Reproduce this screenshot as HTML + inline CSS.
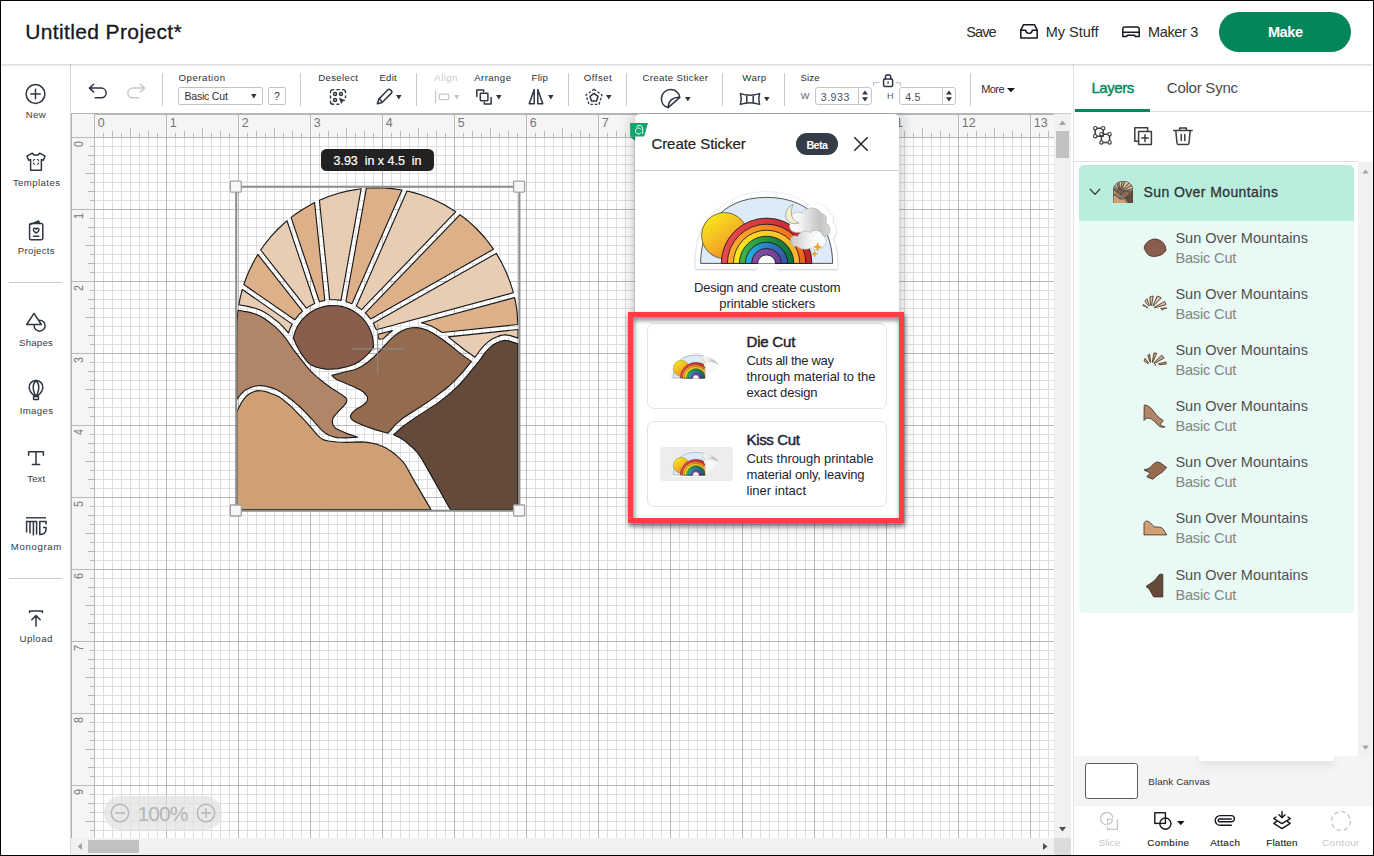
<!DOCTYPE html>
<html lang="en"><head><meta charset="utf-8"><title>Untitled Project - Design Space</title>
<style>
*{box-sizing:border-box;margin:0;padding:0}
html,body{width:1374px;height:856px;overflow:hidden;background:#fff}
body{position:relative;font-family:"Liberation Sans",sans-serif;color:#1e2430}
.a{position:absolute;display:block}
.t{position:absolute;white-space:pre;line-height:1;display:block}
.ic{fill:none;stroke:#2f3542;stroke-width:1.5;stroke-linecap:round;stroke-linejoin:round}
.ic2{stroke:#3d3d3d}
</style></head>
<body>
<div class="a" style="left:71px;top:113px;width:983px;height:725px;background-color:#fff;background-image:linear-gradient(to right,#b9b9b9 1px,transparent 1px),linear-gradient(to bottom,#b9b9b9 1px,transparent 1px),linear-gradient(to right,#dedede 1px,transparent 1px),linear-gradient(to bottom,#dedede 1px,transparent 1px);background-size:72px 72px,72px 72px,9px 9px,9px 9px;background-position:23px 24px,23px 24px,23px 24px,23px 24px;"></div>
<div class="a" style="left:71px;top:113px;width:983px;height:25px;background:#f5f5f5;border-top:2px solid #b6b6b6;border-bottom:1px solid #b9b9b9"></div>
<div class="a" style="left:71px;top:113px;width:24px;height:725px;background:#f5f5f5;border-left:1px solid #b4b4b4;border-right:1px solid #b9b9b9;border-top:1px solid #b4b4b4"></div>
<svg class="a" style="left:0;top:0" width="1374" height="856"><path d="M94.5 114v23M103.5 133v4M112.5 131v6M121.5 133v4M130.5 128v9M139.5 133v4M148.5 131v6M157.5 133v4M166.5 114v23M175.5 133v4M184.5 131v6M193.5 133v4M202.5 128v9M211.5 133v4M220.5 131v6M229.5 133v4M238.5 114v23M247.5 133v4M256.5 131v6M265.5 133v4M274.5 128v9M283.5 133v4M292.5 131v6M301.5 133v4M310.5 114v23M319.5 133v4M328.5 131v6M337.5 133v4M346.5 128v9M355.5 133v4M364.5 131v6M373.5 133v4M382.5 114v23M391.5 133v4M400.5 131v6M409.5 133v4M418.5 128v9M427.5 133v4M436.5 131v6M445.5 133v4M454.5 114v23M463.5 133v4M472.5 131v6M481.5 133v4M490.5 128v9M499.5 133v4M508.5 131v6M517.5 133v4M526.5 114v23M535.5 133v4M544.5 131v6M553.5 133v4M562.5 128v9M571.5 133v4M580.5 131v6M589.5 133v4M598.5 114v23M607.5 133v4M616.5 131v6M625.5 133v4M634.5 128v9M643.5 133v4M652.5 131v6M661.5 133v4M670.5 114v23M679.5 133v4M688.5 131v6M697.5 133v4M706.5 128v9M715.5 133v4M724.5 131v6M733.5 133v4M742.5 114v23M751.5 133v4M760.5 131v6M769.5 133v4M778.5 128v9M787.5 133v4M796.5 131v6M805.5 133v4M814.5 114v23M823.5 133v4M832.5 131v6M841.5 133v4M850.5 128v9M859.5 133v4M868.5 131v6M877.5 133v4M886.5 114v23M895.5 133v4M904.5 131v6M913.5 133v4M922.5 128v9M931.5 133v4M940.5 131v6M949.5 133v4M958.5 114v23M967.5 133v4M976.5 131v6M985.5 133v4M994.5 128v9M1003.5 133v4M1012.5 131v6M1021.5 133v4M1030.5 114v23M1039.5 133v4M1048.5 131v6M72 137.5h22M90 146.5h4M88 155.5h6M90 164.5h4M85 173.5h9M90 182.5h4M88 191.5h6M90 200.5h4M72 209.5h22M90 218.5h4M88 227.5h6M90 236.5h4M85 245.5h9M90 254.5h4M88 263.5h6M90 272.5h4M72 281.5h22M90 290.5h4M88 299.5h6M90 308.5h4M85 317.5h9M90 326.5h4M88 335.5h6M90 344.5h4M72 353.5h22M90 362.5h4M88 371.5h6M90 380.5h4M85 389.5h9M90 398.5h4M88 407.5h6M90 416.5h4M72 425.5h22M90 434.5h4M88 443.5h6M90 452.5h4M85 461.5h9M90 470.5h4M88 479.5h6M90 488.5h4M72 497.5h22M90 506.5h4M88 515.5h6M90 524.5h4M85 533.5h9M90 542.5h4M88 551.5h6M90 560.5h4M72 569.5h22M90 578.5h4M88 587.5h6M90 596.5h4M85 605.5h9M90 614.5h4M88 623.5h6M90 632.5h4M72 641.5h22M90 650.5h4M88 659.5h6M90 668.5h4M85 677.5h9M90 686.5h4M88 695.5h6M90 704.5h4M72 713.5h22M90 722.5h4M88 731.5h6M90 740.5h4M85 749.5h9M90 758.5h4M88 767.5h6M90 776.5h4M72 785.5h22M90 794.5h4M88 803.5h6M90 812.5h4M85 821.5h9M90 830.5h4" stroke="#b9b9b9" stroke-width="1" fill="none" shape-rendering="crispEdges"/></svg>
<span class="t" style="left:97.80px;top:117.22px;font-size:12.5px;color:#767676;">0</span>
<span class="t" style="left:169.80px;top:117.22px;font-size:12.5px;color:#767676;">1</span>
<span class="t" style="left:241.80px;top:117.22px;font-size:12.5px;color:#767676;">2</span>
<span class="t" style="left:313.80px;top:117.22px;font-size:12.5px;color:#767676;">3</span>
<span class="t" style="left:385.80px;top:117.22px;font-size:12.5px;color:#767676;">4</span>
<span class="t" style="left:457.80px;top:117.22px;font-size:12.5px;color:#767676;">5</span>
<span class="t" style="left:529.80px;top:117.22px;font-size:12.5px;color:#767676;">6</span>
<span class="t" style="left:601.80px;top:117.22px;font-size:12.5px;color:#767676;">7</span>
<span class="t" style="left:673.80px;top:117.22px;font-size:12.5px;color:#767676;">8</span>
<span class="t" style="left:745.80px;top:117.22px;font-size:12.5px;color:#767676;">9</span>
<span class="t" style="left:817.80px;top:117.22px;font-size:12.5px;color:#767676;">10</span>
<span class="t" style="left:889.80px;top:117.22px;font-size:12.5px;color:#767676;">11</span>
<span class="t" style="left:961.80px;top:117.22px;font-size:12.5px;color:#767676;">12</span>
<span class="t" style="left:1033.80px;top:117.22px;font-size:12.5px;color:#767676;">13</span>
<span class="t" style="left:72.3px;top:146.7px;font-size:13px;color:#767676;transform-origin:0 0;transform:rotate(-90deg) scaleX(0.82)">0</span>
<span class="t" style="left:72.3px;top:218.7px;font-size:13px;color:#767676;transform-origin:0 0;transform:rotate(-90deg) scaleX(0.82)">1</span>
<span class="t" style="left:72.3px;top:290.7px;font-size:13px;color:#767676;transform-origin:0 0;transform:rotate(-90deg) scaleX(0.82)">2</span>
<span class="t" style="left:72.3px;top:362.7px;font-size:13px;color:#767676;transform-origin:0 0;transform:rotate(-90deg) scaleX(0.82)">3</span>
<span class="t" style="left:72.3px;top:434.7px;font-size:13px;color:#767676;transform-origin:0 0;transform:rotate(-90deg) scaleX(0.82)">4</span>
<span class="t" style="left:72.3px;top:506.7px;font-size:13px;color:#767676;transform-origin:0 0;transform:rotate(-90deg) scaleX(0.82)">5</span>
<span class="t" style="left:72.3px;top:578.7px;font-size:13px;color:#767676;transform-origin:0 0;transform:rotate(-90deg) scaleX(0.82)">6</span>
<span class="t" style="left:72.3px;top:650.7px;font-size:13px;color:#767676;transform-origin:0 0;transform:rotate(-90deg) scaleX(0.82)">7</span>
<span class="t" style="left:72.3px;top:722.7px;font-size:13px;color:#767676;transform-origin:0 0;transform:rotate(-90deg) scaleX(0.82)">8</span>
<span class="t" style="left:72.3px;top:794.7px;font-size:13px;color:#767676;transform-origin:0 0;transform:rotate(-90deg) scaleX(0.82)">9</span>
<svg class="a" style="left:0;top:0" width="1374" height="856" viewBox="0 0 1374 856"><g stroke="#171717" stroke-width="1.12" stroke-linejoin="round"><path d="M242.3 289.5L240.4 296.8L238.8 304.8L248.9 306.6L255.2 308.2L259.5 309.7L264.6 312.3L271.2 316.6L278.3 322.2L283.2 326.9L288.5 333.1L290.2 328.3L292.2 324.1Z" fill="#e8cdb5"/>
<path d="M257.8 254.4L253.3 262.4L250.0 269.0L247.0 275.7L243.8 284.5L294.8 319.8L298.7 314.9L302.5 311.2Z" fill="#dcb18a"/>
<path d="M287.0 220.7L278.0 229.0L271.3 236.2L265.1 243.8L260.7 250.0L306.4 308.1L310.2 305.7L314.7 303.5Z" fill="#e8cdb5"/>
<path d="M314.6 202.6L302.9 209.2L296.8 213.2L291.1 217.4L319.4 301.7L324.8 300.4Z" fill="#dcb18a"/>
<path d="M361.2 188.7L348.2 190.9L338.6 193.2L329.3 196.3L319.4 200.3L329.7 299.8L335.3 299.8L341.0 300.4Z" fill="#e8cdb5"/>
<path d="M402.0 190.0L392.1 188.6L384.8 188.0L374.9 187.8L366.4 188.2L345.9 301.5L351.9 303.7Z" fill="#dcb18a"/>
<path d="M455.8 211.7L443.4 204.3L432.3 199.0L420.8 194.7L413.8 192.6L407.0 191.0L356.4 306.0L361.6 309.6Z" fill="#e8cdb5"/>
<path d="M493.5 249.2L485.1 238.0L476.8 229.0L467.8 220.7L460.0 214.6L365.4 312.9L368.1 315.8L370.6 319.0Z" fill="#dcb18a"/>
<path d="M513.4 292.7L510.3 282.6L505.8 271.2L501.5 262.4L496.3 253.4L373.3 323.3L376.3 329.7Z" fill="#e8cdb5"/>
<path d="M377.8 334.4L378.8 339.2L383.5 338.7L387.7 334.5L392.4 330.5Z" fill="#dcb18a"/>
<path d="M517.9 324.5L517.0 311.3L515.9 304.0L514.6 297.6L421.3 322.7L426.1 324.0L430.7 325.7L435.9 328.5L442.2 332.5Z" fill="#dcb18a"/>
<path d="M448.3 336.9L464.7 350.0L475.0 357.3L480.0 350.2L484.2 345.4L489.6 340.7L492.0 339.1L494.3 338.0L498.0 336.4L500.9 335.4L503.2 335.0L505.8 334.9L510.4 335.6L518.0 338.1L518.0 329.5Z" fill="#e8cdb5"/>
<path d="M236.8 336.5L236.8 399.4L241.1 394.0L244.6 390.6L247.5 388.9L252.1 387.0L257.0 385.8L260.7 385.6L265.9 386.2L271.1 387.6L275.8 389.3L279.8 391.4L288.3 397.3L294.1 401.8L300.0 407.0L305.9 412.8L310.8 418.0L321.4 429.8L324.2 432.4L326.3 433.8L329.1 435.3L331.8 436.3L334.7 437.1L337.6 437.6L345.8 437.9L357.6 437.3L345.8 433.1L337.9 429.6L335.9 428.4L334.5 427.2L333.5 425.9L332.8 424.1L332.4 422.2L332.4 420.4L332.9 418.4L333.7 416.9L335.5 414.7L344.0 405.7L346.0 402.9L346.6 401.6L346.7 400.4L346.6 399.3L345.7 397.8L342.5 395.1L331.6 388.2L324.7 383.3L316.6 376.6L310.7 371.1L306.5 366.3L293.4 349.6L286.4 339.2L280.3 331.9L274.7 326.4L269.4 322.2L265.0 319.0L260.4 316.2L257.2 314.7L253.7 313.5L249.9 312.4L238.0 310.2L237.0 321.0Z" fill="#b08568"/>
<path d="M236.8 411.6L236.8 509.6L431.0 509.6L415.2 482.6L405.4 465.0L403.0 461.9L399.6 458.4L395.6 454.7L392.5 452.2L387.0 448.6L382.3 446.3L377.5 444.4L372.6 443.2L367.6 442.4L360.9 441.9L346.3 442.4L337.0 442.0L328.4 441.0L324.6 440.1L322.7 439.4L320.4 437.9L317.6 435.4L310.7 427.2L303.0 418.7L290.3 405.7L282.6 399.4L278.9 396.8L275.8 395.2L268.4 392.4L264.3 391.3L260.6 390.7L258.4 390.6L255.5 391.1L251.3 392.8L248.3 394.6L246.3 396.2L244.1 398.8L241.5 402.5Z" fill="#cf9f75"/>
<path d="M332.0 375.4L334.2 377.8L336.6 379.5L354.9 387.3L360.7 390.2L363.0 391.7L364.8 393.5L366.3 395.3L367.3 397.1L367.7 398.7L367.4 400.2L366.7 401.6L365.6 403.0L363.4 405.0L355.9 409.4L353.1 411.9L351.5 413.9L350.7 415.3L350.5 416.5L350.7 417.7L351.7 419.3L353.5 420.8L355.5 422.0L364.1 425.7L375.1 429.6L387.9 433.3L394.9 425.1L401.4 419.3L405.7 416.2L422.5 405.5L431.2 399.6L442.9 391.0L448.8 386.3L454.7 380.7L460.5 374.7L464.2 370.4L471.4 361.4L461.4 354.4L450.8 345.8L441.9 339.0L432.2 332.7L427.4 330.3L421.5 328.4L416.7 327.6L411.8 327.8L406.9 328.8L403.0 330.3L399.1 332.5L395.3 335.2L389.5 340.4L380.8 350.0L373.0 357.8L368.1 362.0L362.3 366.0L358.4 368.1L354.6 369.7L343.7 372.3Z" fill="#956b50"/>
<path d="M393.7 434.7L400.3 438.0L404.9 441.1L413.1 448.0L416.0 451.0L418.0 453.4L422.1 459.5L431.2 475.4L450.3 509.6L518.0 509.6L518.0 343.9L508.9 340.9L506.8 340.5L504.9 340.4L502.4 340.8L500.0 341.5L495.9 343.3L493.3 344.8L489.6 347.9L485.7 351.9L479.1 361.0L464.4 379.1L459.5 384.5L453.7 390.1L444.9 397.6L437.0 403.6L415.7 417.4L403.9 425.6L400.3 428.6Z" fill="#644a3b"/>
<path d="M293.3 338.1L296.6 345.4L300.7 352.8L306.2 360.3L308.7 363.1L311.1 365.0L315.6 366.9L319.7 368.0L325.6 369.1L331.2 369.3L338.3 368.6L347.0 366.8L353.9 364.5L359.0 361.7L363.6 358.1L368.8 353.2L373.5 347.4L373.2 341.4L372.6 337.4L371.5 333.5L370.1 329.8L368.3 326.2L366.2 322.8L363.7 319.6L360.9 316.7L357.9 314.1L352.9 310.7L349.3 308.9L345.5 307.5L341.6 306.4L337.7 305.8L331.7 305.5L327.6 305.9L323.7 306.6L319.8 307.7L316.1 309.2L312.5 311.1L309.2 313.3L306.0 315.8L303.2 318.6L300.6 321.7L298.3 325.0L296.4 328.6L294.9 332.3Z" fill="#8a5e4c"/></g></svg>
<svg class="a" style="left:0;top:0" width="1374" height="856" viewBox="0 0 1374 856"><rect x="236.2" y="186.75" width="283.2" height="323.95" fill="none" stroke="#8e8e8e" stroke-width="2.1"/><rect x="230.3" y="181.1" width="11" height="11" rx="0.8" fill="#f7f7f7" stroke="#a2a2a2" stroke-width="1.3"/><rect x="513.6" y="181.1" width="11" height="11" rx="0.8" fill="#f7f7f7" stroke="#a2a2a2" stroke-width="1.3"/><rect x="230.3" y="505" width="11" height="11" rx="0.8" fill="#f7f7f7" stroke="#a2a2a2" stroke-width="1.3"/><rect x="513.6" y="505" width="11" height="11" rx="0.8" fill="#f7f7f7" stroke="#a2a2a2" stroke-width="1.3"/><path d="M352 348.9H403M377.6 324V374" stroke="#8c8c8c" stroke-opacity="0.85" stroke-width="1.2" fill="none"/></svg>
<div class="a" style="left:321px;top:149px;width:113px;height:21.6px;background:#222;border-radius:5.5px"></div>
<span class="t" style="left:333.50px;top:154.62px;font-size:12.5px;color:#fff;letter-spacing:-0.015px;-webkit-text-stroke:0.2px #fff;">3.93  in x 4.5  in</span>
<div class="a" style="left:104px;top:796px;width:118px;height:34px;background:rgba(225,225,225,.75);border-radius:17px"></div>
<svg class="a" style="left:110px;top:803px;" width="20" height="20" viewBox="0 0 20 20"><circle cx="10" cy="10" r="8.7" fill="none" stroke="#b5b5b5" stroke-width="1.4"/><path d="M5 10h10" stroke="#b5b5b5" stroke-width="1.4"/></svg>
<svg class="a" style="left:196px;top:803px;" width="20" height="20" viewBox="0 0 20 20"><circle cx="10" cy="10" r="8.7" fill="none" stroke="#b5b5b5" stroke-width="1.4"/><path d="M5 10h10M10 5v10" stroke="#b5b5b5" stroke-width="1.4"/></svg>
<span class="t" style="left:137.50px;top:802.72px;font-size:21px;color:#b5b5b5;letter-spacing:-0.904px;">100%</span>
<div class="a" style="left:1054px;top:113px;width:17px;height:725px;background:#f1f1f1;border-top:1px solid #c9c9c9"></div>
<div class="a" style="left:71px;top:838px;width:983px;height:17px;background:#f1f1f1"></div>
<div class="a" style="left:1054px;top:838px;width:17px;height:17px;background:#dcdcdc"></div>
<div class="a" style="left:1056px;top:131px;width:13px;height:27px;background:#c1c1c1"></div>
<div class="a" style="left:88px;top:840px;width:51px;height:13px;background:#c1c1c1"></div>
<svg class="a" style="left:1054px;top:113px;" width="17" height="17" viewBox="0 0 17 17"><path d="M5 12l3.5-4.5 3.5 4.5z" fill="#a3a3a3"/></svg>
<svg class="a" style="left:1054px;top:821px;" width="17" height="17" viewBox="0 0 17 17"><path d="M5 6l3.5 4.5 3.5-4.5z" fill="#505050"/></svg>
<svg class="a" style="left:71px;top:838px;" width="17" height="17" viewBox="0 0 17 17"><path d="M11 5l-4.5 3.5 4.5 3.5z" fill="#a3a3a3"/></svg>
<svg class="a" style="left:1037px;top:838px;" width="17" height="17" viewBox="0 0 17 17"><path d="M6 5l4.5 3.5-4.5 3.5z" fill="#505050"/></svg>
<div class="a" style="left:635px;top:114px;width:264px;height:407px;background:#fff;border-radius:5px 5px 0 0;box-shadow:0 1px 16px rgba(0,0,0,.3)"></div>
<div class="a" style="left:635px;top:170px;width:264px;height:1px;background:#cfcfcf"></div>
<svg class="a" style="left:628px;top:120px;" width="22" height="24" viewBox="0 0 22 24"><path d="M2.1 2.9H20L16.2 16.5H2.1Z" fill="#12a66f"/><path d="M2.1 16.5H7.1V21Z" fill="#0c8a5c"/><path d="M13.2 9.3A3.1 3.1 0 1 0 13.2 12.7M14.7 13.7V8.6A3.4 3.4 0 0 0 8.4 6.9" fill="none" stroke="#fff" stroke-width="0.95" stroke-linecap="round"/></svg>
<span class="t" style="left:651.40px;top:135.70px;font-size:15px;color:#222;letter-spacing:-0.049px;-webkit-text-stroke:0.2px #222;">Create Sticker</span>
<div class="a" style="left:796px;top:133.3px;width:42px;height:21.4px;background:#353b48;border-radius:11px"></div>
<span class="t" style="left:806.45px;top:139.56px;font-size:10.8px;color:#fff;font-weight:700;letter-spacing:-0.637px;">Beta</span>
<svg class="a" style="left:852px;top:135px;" width="18" height="18" viewBox="0 0 18 18"><path d="M2.3 2.3L15.7 15.7M15.7 2.3L2.3 15.7" stroke="#20242c" stroke-width="1.5" fill="none"/></svg>
<svg class="a" style="left:686px;top:184px;" width="160" height="100" viewBox="0 0 160 100"><defs><linearGradient id="r0sun" x1="0.15" y1="0.1" x2="0.8" y2="0.95"><stop offset="0" stop-color="#f8e71c"/><stop offset="1" stop-color="#f0852d"/></linearGradient><linearGradient id="r0cl" x1="0" y1="0" x2="1" y2="0"><stop offset="0" stop-color="#fff"/><stop offset="0.25" stop-color="#f4f4f4"/><stop offset="0.75" stop-color="#c4c4c4"/><stop offset="1" stop-color="#d8d8d8"/></linearGradient><linearGradient id="r0cl2" x1="0" y1="0" x2="1" y2="0"><stop offset="0" stop-color="#c9c9c9"/><stop offset="0.6" stop-color="#f6f6f6"/><stop offset="1" stop-color="#fff"/></linearGradient><linearGradient id="r0b0" x1="0" y1="0" x2="1" y2="0"><stop offset="0" stop-color="#ea4a50"/><stop offset="1" stop-color="#c0242b"/></linearGradient><linearGradient id="r0b1" x1="0" y1="0" x2="1" y2="0"><stop offset="0" stop-color="#fcae2c"/><stop offset="1" stop-color="#f2611f"/></linearGradient><linearGradient id="r0b2" x1="0" y1="0" x2="1" y2="0"><stop offset="0" stop-color="#f9e81f"/><stop offset="1" stop-color="#fbb034"/></linearGradient><linearGradient id="r0b3" x1="0" y1="0" x2="1" y2="0"><stop offset="0" stop-color="#3fb54a"/><stop offset="1" stop-color="#0a7138"/></linearGradient><linearGradient id="r0b4" x1="0" y1="0" x2="1" y2="0"><stop offset="0" stop-color="#1fb4e4"/><stop offset="1" stop-color="#3a53a4"/></linearGradient><linearGradient id="r0b5" x1="0" y1="0" x2="1" y2="0"><stop offset="0" stop-color="#8a4fa6"/><stop offset="1" stop-color="#6c3f98"/></linearGradient><filter id="r0sh" x="-10%" y="-10%" width="120%" height="130%"><feGaussianBlur stdDeviation="1.3"/></filter></defs><g transform="translate(80.6,79.4)"><path d="M-71 5.5L-71 -4C-70 -30 -60 -47 -47 -55C-33 -68 -14 -71.5 0 -71.5C17 -71.5 32 -66 42 -58C49 -61 58 -59 61.5 -52C66 -49 67.5 -44 66 -41C71 -36 70.5 -29 66.5 -25.5C69 -18 71 -10 71 -3L71 5.5L10 5.5L9.5 0C9 -6 4 -9 0 -9C-4 -9 -9 -6 -9.5 0L-10 5.5Z" fill="#000" opacity="0.3" filter="url(#r0sh)" transform="translate(0,0.6)"/><path d="M-71 5.5L-71 -4C-70 -30 -60 -47 -47 -55C-33 -68 -14 -71.5 0 -71.5C17 -71.5 32 -66 42 -58C49 -61 58 -59 61.5 -52C66 -49 67.5 -44 66 -41C71 -36 70.5 -29 66.5 -25.5C69 -18 71 -10 71 -3L71 5.5L10 5.5L9.5 0C9 -6 4 -9 0 -9C-4 -9 -9 -6 -9.5 0L-10 5.5Z" fill="#fff"/><path d="M-66 0C-66 -30 -50 -66 0 -66C50 -66 66 -30 66 0Z" fill="#ddebf8" stroke="#111" stroke-width="0.7"/><circle cx="-42" cy="-27.8" r="23" fill="url(#r0sun)" stroke="#222" stroke-width="0.63"/><path d="M-45.3 0A45.3 45.3 0 0 1 45.3 0Z" fill="url(#r0b0)" stroke="#111" stroke-width="0.805"/><path d="M-39.2 0A39.2 39.2 0 0 1 39.2 0Z" fill="url(#r0b1)" stroke="#111" stroke-width="0.805"/><path d="M-33.2 0A33.2 33.2 0 0 1 33.2 0Z" fill="url(#r0b2)" stroke="#111" stroke-width="0.805"/><path d="M-27.2 0A27.2 27.2 0 0 1 27.2 0Z" fill="url(#r0b3)" stroke="#111" stroke-width="0.805"/><path d="M-21.1 0A21.1 21.1 0 0 1 21.1 0Z" fill="url(#r0b4)" stroke="#111" stroke-width="0.805"/><path d="M-15 0A15 15 0 0 1 15 0Z" fill="url(#r0b5)" stroke="#111" stroke-width="0.805"/><path d="M-9 0.5A9 9 0 0 1 9 0.5Z" fill="#fff" stroke="#111" stroke-width="0.805"/><path d="M-10 0.6h20v3h-20z" fill="#fff"/><path d="M23.5 -40C21 -47 27 -53.5 35.5 -50.5C38.5 -56.5 50 -58 55 -50C60 -49 61 -43 59 -40.5C65 -38 65.5 -29 58 -26.5C55 -25.5 51 -27 49.5 -29.5L30 -31C24 -31.5 21.5 -36 23.5 -40Z" fill="url(#r0cl)" stroke="#9a9a9a" stroke-width="0.42"/><path d="M26.5 -59C19.5 -56 17.5 -48.5 20.5 -43.5C23 -39.5 28.5 -39 32.5 -40.5C26.5 -42 22 -49 26.5 -59Z" fill="#f6f1c9" stroke="#666" stroke-width="0.49"/><path d="M24 -22.5C23 -26.5 27 -29 31 -27C33 -32 40 -34 44 -30.5C47 -35 55 -33 56 -28C60 -26 60.5 -20 57 -17.5C55 -13.5 47 -12.5 44 -15.5C40 -13 33 -14 31 -17C27.5 -16 24 -18.5 24 -22.5Z" fill="url(#r0cl2)" stroke="#9a9a9a" stroke-width="0.42"/><path d="M51 -20.7L52.05 -17.55L55.2 -16.5L52.05 -15.45L51 -12.3L49.95 -15.45L46.8 -16.5L49.95 -17.55ZM48 -12.7L48.8 -10.3L51.2 -9.5L48.8 -8.7L48 -6.3L47.2 -8.7L44.8 -9.5L47.2 -10.3Z" fill="#f5a623" stroke="#c97a10" stroke-width="0.3"/></g></svg>
<span class="t" style="left:694.05px;top:281.20px;font-size:13px;color:#1e2430;letter-spacing:-0.197px;">Design and create custom</span>
<span class="t" style="left:719.30px;top:297.00px;font-size:13px;color:#1e2430;letter-spacing:-0.091px;">printable stickers</span>
<div class="a" style="left:633px;top:317px;width:266px;height:201px;background:#fff"></div>
<div class="a" style="left:647px;top:323px;width:239.5px;height:85.8px;border:1px solid #e4e4e4;border-radius:7px;background:#fff"></div>
<div class="a" style="left:647px;top:421px;width:239.5px;height:85.8px;border:1px solid #e4e4e4;border-radius:7px;background:#fff"></div>
<span class="t" style="left:746.50px;top:334.10px;font-size:15px;color:#1e2430;letter-spacing:-0.203px;-webkit-text-stroke:0.45px #1e2430;">Die Cut</span>
<span class="t" style="left:746.50px;top:353.90px;font-size:13px;color:#1e2430;letter-spacing:-0.284px;">Cuts all the way</span>
<span class="t" style="left:746.50px;top:369.90px;font-size:13px;color:#1e2430;letter-spacing:-0.049px;">through material to the</span>
<span class="t" style="left:746.50px;top:385.90px;font-size:13px;color:#1e2430;letter-spacing:-0.181px;">exact design</span>
<span class="t" style="left:746.50px;top:432.00px;font-size:15px;color:#1e2430;letter-spacing:-0.335px;-webkit-text-stroke:0.45px #1e2430;">Kiss Cut</span>
<span class="t" style="left:746.50px;top:451.80px;font-size:13px;color:#1e2430;letter-spacing:-0.044px;">Cuts through printable</span>
<span class="t" style="left:746.50px;top:467.80px;font-size:13px;color:#1e2430;letter-spacing:-0.150px;">material only, leaving</span>
<span class="t" style="left:746.50px;top:483.80px;font-size:13px;color:#1e2430;letter-spacing:0.023px;">liner intact</span>
<div class="a" style="left:659.5px;top:447px;width:73.5px;height:33.5px;background:#eceeed;border-radius:3px"></div>
<svg class="a" style="left:669px;top:351px;" width="56" height="32" viewBox="0 0 56 32"><defs><linearGradient id="r1sun" x1="0.15" y1="0.1" x2="0.8" y2="0.95"><stop offset="0" stop-color="#f8e71c"/><stop offset="1" stop-color="#f0852d"/></linearGradient><linearGradient id="r1cl" x1="0" y1="0" x2="1" y2="0"><stop offset="0" stop-color="#fff"/><stop offset="0.25" stop-color="#f4f4f4"/><stop offset="0.75" stop-color="#c4c4c4"/><stop offset="1" stop-color="#d8d8d8"/></linearGradient><linearGradient id="r1cl2" x1="0" y1="0" x2="1" y2="0"><stop offset="0" stop-color="#c9c9c9"/><stop offset="0.6" stop-color="#f6f6f6"/><stop offset="1" stop-color="#fff"/></linearGradient><linearGradient id="r1b0" x1="0" y1="0" x2="1" y2="0"><stop offset="0" stop-color="#ea4a50"/><stop offset="1" stop-color="#c0242b"/></linearGradient><linearGradient id="r1b1" x1="0" y1="0" x2="1" y2="0"><stop offset="0" stop-color="#fcae2c"/><stop offset="1" stop-color="#f2611f"/></linearGradient><linearGradient id="r1b2" x1="0" y1="0" x2="1" y2="0"><stop offset="0" stop-color="#f9e81f"/><stop offset="1" stop-color="#fbb034"/></linearGradient><linearGradient id="r1b3" x1="0" y1="0" x2="1" y2="0"><stop offset="0" stop-color="#3fb54a"/><stop offset="1" stop-color="#0a7138"/></linearGradient><linearGradient id="r1b4" x1="0" y1="0" x2="1" y2="0"><stop offset="0" stop-color="#1fb4e4"/><stop offset="1" stop-color="#3a53a4"/></linearGradient><linearGradient id="r1b5" x1="0" y1="0" x2="1" y2="0"><stop offset="0" stop-color="#8a4fa6"/><stop offset="1" stop-color="#6c3f98"/></linearGradient><filter id="r1sh" x="-10%" y="-10%" width="120%" height="130%"><feGaussianBlur stdDeviation="1.3"/></filter></defs><linearGradient id="r1pl" x1="0" y1="0" x2="1" y2="0.3"><stop offset="0" stop-color="#fff"/><stop offset="0.45" stop-color="#eaeaea"/><stop offset="1" stop-color="#adadad"/></linearGradient><clipPath id="r1cp"><path d="M0 0H33.6L36.1 12.5V32H0Z"/></clipPath><path d="M36 11.6L49.9 14.2L36 27.2Z" fill="#f8f8f8"/><g clip-path="url(#r1cp)"><g transform="translate(26.9,27) scale(0.347)"><path d="M-71 5.5L-71 -4C-70 -30 -60 -47 -47 -55C-33 -68 -14 -71.5 0 -71.5C17 -71.5 32 -66 42 -58C49 -61 58 -59 61.5 -52C66 -49 67.5 -44 66 -41C71 -36 70.5 -29 66.5 -25.5C69 -18 71 -10 71 -3L71 5.5L10 5.5L9.5 0C9 -6 4 -9 0 -9C-4 -9 -9 -6 -9.5 0L-10 5.5Z" fill="#000" opacity="0.2" filter="url(#r1sh)"/><path d="M-71 5.5L-71 -4C-70 -30 -60 -47 -47 -55C-33 -68 -14 -71.5 0 -71.5C17 -71.5 32 -66 42 -58C49 -61 58 -59 61.5 -52C66 -49 67.5 -44 66 -41C71 -36 70.5 -29 66.5 -25.5C69 -18 71 -10 71 -3L71 5.5L10 5.5L9.5 0C9 -6 4 -9 0 -9C-4 -9 -9 -6 -9.5 0L-10 5.5Z" fill="#fff"/><path d="M-66 0C-66 -30 -50 -66 0 -66C50 -66 66 -30 66 0Z" fill="#ddebf8" stroke="#111" stroke-width="0.75"/><circle cx="-42" cy="-27.8" r="23" fill="url(#r1sun)" stroke="#222" stroke-width="0.675"/><path d="M-45.3 0A45.3 45.3 0 0 1 45.3 0Z" fill="url(#r1b0)" stroke="#111" stroke-width="0.8625"/><path d="M-39.2 0A39.2 39.2 0 0 1 39.2 0Z" fill="url(#r1b1)" stroke="#111" stroke-width="0.8625"/><path d="M-33.2 0A33.2 33.2 0 0 1 33.2 0Z" fill="url(#r1b2)" stroke="#111" stroke-width="0.8625"/><path d="M-27.2 0A27.2 27.2 0 0 1 27.2 0Z" fill="url(#r1b3)" stroke="#111" stroke-width="0.8625"/><path d="M-21.1 0A21.1 21.1 0 0 1 21.1 0Z" fill="url(#r1b4)" stroke="#111" stroke-width="0.8625"/><path d="M-15 0A15 15 0 0 1 15 0Z" fill="url(#r1b5)" stroke="#111" stroke-width="0.8625"/><path d="M-9 0.5A9 9 0 0 1 9 0.5Z" fill="#fff" stroke="#111" stroke-width="0.8625"/><path d="M-10 0.6h20v3h-20z" fill="#fff"/><path d="M23.5 -40C21 -47 27 -53.5 35.5 -50.5C38.5 -56.5 50 -58 55 -50C60 -49 61 -43 59 -40.5C65 -38 65.5 -29 58 -26.5C55 -25.5 51 -27 49.5 -29.5L30 -31C24 -31.5 21.5 -36 23.5 -40Z" fill="url(#r1cl)" stroke="#9a9a9a" stroke-width="0.45"/><path d="M26.5 -59C19.5 -56 17.5 -48.5 20.5 -43.5C23 -39.5 28.5 -39 32.5 -40.5C26.5 -42 22 -49 26.5 -59Z" fill="#f6f1c9" stroke="#666" stroke-width="0.525"/><path d="M24 -22.5C23 -26.5 27 -29 31 -27C33 -32 40 -34 44 -30.5C47 -35 55 -33 56 -28C60 -26 60.5 -20 57 -17.5C55 -13.5 47 -12.5 44 -15.5C40 -13 33 -14 31 -17C27.5 -16 24 -18.5 24 -22.5Z" fill="url(#r1cl2)" stroke="#9a9a9a" stroke-width="0.45"/></g></g><path d="M33.6 5.6C38 5.2 45.5 7.4 49.3 13.8C45 10.6 40 10.4 35.9 11.4Z" fill="url(#r1pl)" stroke="#cfcfcf" stroke-width="0.4"/></svg>
<svg class="a" style="left:669px;top:447.8px;" width="56" height="32" viewBox="0 0 56 32"><defs><linearGradient id="r2sun" x1="0.15" y1="0.1" x2="0.8" y2="0.95"><stop offset="0" stop-color="#f8e71c"/><stop offset="1" stop-color="#f0852d"/></linearGradient><linearGradient id="r2cl" x1="0" y1="0" x2="1" y2="0"><stop offset="0" stop-color="#fff"/><stop offset="0.25" stop-color="#f4f4f4"/><stop offset="0.75" stop-color="#c4c4c4"/><stop offset="1" stop-color="#d8d8d8"/></linearGradient><linearGradient id="r2cl2" x1="0" y1="0" x2="1" y2="0"><stop offset="0" stop-color="#c9c9c9"/><stop offset="0.6" stop-color="#f6f6f6"/><stop offset="1" stop-color="#fff"/></linearGradient><linearGradient id="r2b0" x1="0" y1="0" x2="1" y2="0"><stop offset="0" stop-color="#ea4a50"/><stop offset="1" stop-color="#c0242b"/></linearGradient><linearGradient id="r2b1" x1="0" y1="0" x2="1" y2="0"><stop offset="0" stop-color="#fcae2c"/><stop offset="1" stop-color="#f2611f"/></linearGradient><linearGradient id="r2b2" x1="0" y1="0" x2="1" y2="0"><stop offset="0" stop-color="#f9e81f"/><stop offset="1" stop-color="#fbb034"/></linearGradient><linearGradient id="r2b3" x1="0" y1="0" x2="1" y2="0"><stop offset="0" stop-color="#3fb54a"/><stop offset="1" stop-color="#0a7138"/></linearGradient><linearGradient id="r2b4" x1="0" y1="0" x2="1" y2="0"><stop offset="0" stop-color="#1fb4e4"/><stop offset="1" stop-color="#3a53a4"/></linearGradient><linearGradient id="r2b5" x1="0" y1="0" x2="1" y2="0"><stop offset="0" stop-color="#8a4fa6"/><stop offset="1" stop-color="#6c3f98"/></linearGradient><filter id="r2sh" x="-10%" y="-10%" width="120%" height="130%"><feGaussianBlur stdDeviation="1.3"/></filter></defs><linearGradient id="r2pl" x1="0" y1="0" x2="1" y2="0.3"><stop offset="0" stop-color="#fff"/><stop offset="0.45" stop-color="#eaeaea"/><stop offset="1" stop-color="#adadad"/></linearGradient><clipPath id="r2cp"><path d="M0 0H33.6L36.1 12.5V32H0Z"/></clipPath><path d="M36 11.6L49.9 14.2L36 27.2Z" fill="#f8f8f8"/><g clip-path="url(#r2cp)"><g transform="translate(26.9,27) scale(0.347)"><path d="M-71 5.5L-71 -4C-70 -30 -60 -47 -47 -55C-33 -68 -14 -71.5 0 -71.5C17 -71.5 32 -66 42 -58C49 -61 58 -59 61.5 -52C66 -49 67.5 -44 66 -41C71 -36 70.5 -29 66.5 -25.5C69 -18 71 -10 71 -3L71 5.5L10 5.5L9.5 0C9 -6 4 -9 0 -9C-4 -9 -9 -6 -9.5 0L-10 5.5Z" fill="#000" opacity="0.2" filter="url(#r2sh)"/><path d="M-71 5.5L-71 -4C-70 -30 -60 -47 -47 -55C-33 -68 -14 -71.5 0 -71.5C17 -71.5 32 -66 42 -58C49 -61 58 -59 61.5 -52C66 -49 67.5 -44 66 -41C71 -36 70.5 -29 66.5 -25.5C69 -18 71 -10 71 -3L71 5.5L10 5.5L9.5 0C9 -6 4 -9 0 -9C-4 -9 -9 -6 -9.5 0L-10 5.5Z" fill="#fff"/><path d="M-66 0C-66 -30 -50 -66 0 -66C50 -66 66 -30 66 0Z" fill="#ddebf8" stroke="#111" stroke-width="0.75"/><circle cx="-42" cy="-27.8" r="23" fill="url(#r2sun)" stroke="#222" stroke-width="0.675"/><path d="M-45.3 0A45.3 45.3 0 0 1 45.3 0Z" fill="url(#r2b0)" stroke="#111" stroke-width="0.8625"/><path d="M-39.2 0A39.2 39.2 0 0 1 39.2 0Z" fill="url(#r2b1)" stroke="#111" stroke-width="0.8625"/><path d="M-33.2 0A33.2 33.2 0 0 1 33.2 0Z" fill="url(#r2b2)" stroke="#111" stroke-width="0.8625"/><path d="M-27.2 0A27.2 27.2 0 0 1 27.2 0Z" fill="url(#r2b3)" stroke="#111" stroke-width="0.8625"/><path d="M-21.1 0A21.1 21.1 0 0 1 21.1 0Z" fill="url(#r2b4)" stroke="#111" stroke-width="0.8625"/><path d="M-15 0A15 15 0 0 1 15 0Z" fill="url(#r2b5)" stroke="#111" stroke-width="0.8625"/><path d="M-9 0.5A9 9 0 0 1 9 0.5Z" fill="#fff" stroke="#111" stroke-width="0.8625"/><path d="M-10 0.6h20v3h-20z" fill="#fff"/><path d="M23.5 -40C21 -47 27 -53.5 35.5 -50.5C38.5 -56.5 50 -58 55 -50C60 -49 61 -43 59 -40.5C65 -38 65.5 -29 58 -26.5C55 -25.5 51 -27 49.5 -29.5L30 -31C24 -31.5 21.5 -36 23.5 -40Z" fill="url(#r2cl)" stroke="#9a9a9a" stroke-width="0.45"/><path d="M26.5 -59C19.5 -56 17.5 -48.5 20.5 -43.5C23 -39.5 28.5 -39 32.5 -40.5C26.5 -42 22 -49 26.5 -59Z" fill="#f6f1c9" stroke="#666" stroke-width="0.525"/><path d="M24 -22.5C23 -26.5 27 -29 31 -27C33 -32 40 -34 44 -30.5C47 -35 55 -33 56 -28C60 -26 60.5 -20 57 -17.5C55 -13.5 47 -12.5 44 -15.5C40 -13 33 -14 31 -17C27.5 -16 24 -18.5 24 -22.5Z" fill="url(#r2cl2)" stroke="#9a9a9a" stroke-width="0.45"/></g></g><path d="M33.6 5.6C38 5.2 45.5 7.4 49.3 13.8C45 10.6 40 10.4 35.9 11.4Z" fill="url(#r2pl)" stroke="#cfcfcf" stroke-width="0.4"/></svg>
<div class="a" style="left:628px;top:312px;width:276px;height:211px;border:5px solid #fd4043;filter:drop-shadow(1px 3.5px 2.5px rgba(0,0,0,.55))"></div>
<div class="a" style="left:71px;top:66px;width:1002.5px;height:47px;background:#fff"></div>
<div class="a" style="left:162px;top:72.5px;width:1px;height:33px;background:#c9c9c9"></div>
<div class="a" style="left:300px;top:72.5px;width:1px;height:33px;background:#c9c9c9"></div>
<div class="a" style="left:416px;top:72.5px;width:1px;height:33px;background:#c9c9c9"></div>
<div class="a" style="left:568px;top:72.5px;width:1px;height:33px;background:#c9c9c9"></div>
<div class="a" style="left:626px;top:72.5px;width:1px;height:33px;background:#c9c9c9"></div>
<div class="a" style="left:722px;top:72.5px;width:1px;height:33px;background:#c9c9c9"></div>
<div class="a" style="left:784px;top:72.5px;width:1px;height:33px;background:#c9c9c9"></div>
<div class="a" style="left:970px;top:72.5px;width:1px;height:33px;background:#c9c9c9"></div>
<svg class="a" style="left:86px;top:81px;" width="24" height="20" viewBox="0 0 24 20"><path class="ic" d="M7.6 3.3L3.4 7.1L7.6 10.9M3.8 7.1H15.3A4.85 4.85 0 0 1 15.3 16.8H9.3" stroke-width="1.5"/></svg>
<svg class="a" style="left:124px;top:81px;" width="24" height="20" viewBox="0 0 24 20"><path class="ic" d="M16.4 3.3L20.6 7.1L16.4 10.9M20.2 7.1H8.7A4.85 4.85 0 0 0 8.7 16.8H14.7" stroke-width="1.5" style="stroke:#c6c9ce"/></svg>
<span class="t" style="left:178.60px;top:73.07px;font-size:9.6px;color:#2a303c;letter-spacing:0.530px;">Operation</span>
<div class="a" style="left:178px;top:87px;width:84.5px;height:18px;border:1px solid #c2c2c2;border-radius:2px;background:#fff"></div>
<span class="t" style="left:184.50px;top:91.01px;font-size:10.5px;color:#2a303c;letter-spacing:-0.204px;">Basic Cut</span>
<svg class="a" style="left:251.3px;top:94.3px;" width="5.6" height="4.4" viewBox="0 0 5.6 4.4"><path d="M0 0H5.6L2.8 4.4Z" fill="#2f3542"/></svg>
<div class="a" style="left:268px;top:87px;width:17.5px;height:18px;border:1px solid #c2c2c2;border-radius:2px;background:#fff"></div>
<span class="t" style="left:273.98px;top:91.01px;font-size:10.5px;color:#2a303c;">?</span>
<span class="t" style="left:318.30px;top:73.07px;font-size:9.6px;color:#2a303c;letter-spacing:0.336px;">Deselect</span>
<svg class="a" style="left:328px;top:87px;" width="20" height="20" viewBox="0 0 20 20"><path d="M2.5 6.2V5.1A2.5 2.5 0 0 1 5 2.6H6.1M8.4 2.6H11.8M14 2.6H15A2.5 2.5 0 0 1 17.5 5.1V6.2M17.5 8.4V11.2M2.5 8.4V11.6M2.5 13.8V14.8A2.5 2.5 0 0 0 5 17.3H6.1M8.4 17.3H11.4" fill="none" stroke="#2f3542" stroke-width="1.4"/><circle class="ic" cx="7.06" cy="7.02" r="1.5" stroke-width="0.9"/><circle class="ic" cx="12.96" cy="7.02" r="1.5" stroke-width="0.9"/><circle class="ic" cx="7.06" cy="12.9" r="1.5" stroke-width="0.9"/><path d="M11.3 11.1L17.2 13.4L14.6 14.2L13.3 16.6Z" fill="#2f3542" stroke="#2f3542" stroke-width="0.5" stroke-linejoin="round"/></svg>
<span class="t" style="left:379.50px;top:73.07px;font-size:9.6px;color:#2a303c;letter-spacing:0.219px;">Edit</span>
<svg class="a" style="left:375px;top:87px;" width="19" height="19" viewBox="0 0 19 19"><path class="ic" d="M2.4 16.8L3.7 12.1L12.8 3C13.6 2.2 14.8 2.2 15.6 3L16.2 3.6C17 4.4 17 5.6 16.2 6.4L7.1 15.5ZM4.2 11.8L7.4 15" stroke-width="1.2"/></svg>
<svg class="a" style="left:396.2px;top:95.2px;" width="5.6" height="4.4" viewBox="0 0 5.6 4.4"><path d="M0 0H5.6L2.8 4.4Z" fill="#2f3542"/></svg>
<span class="t" style="left:434.30px;top:73.07px;font-size:9.6px;color:#c6c9ce;letter-spacing:0.438px;">Align</span>
<svg class="a" style="left:433px;top:89px;" width="18" height="16" viewBox="0 0 18 16"><path d="M2.6 1.6V14.4" stroke="#c6c9ce" stroke-width="1.3" fill="none"/><rect x="6.2" y="5.2" width="9.6" height="5.4" rx="0.8" fill="none" stroke="#c6c9ce" stroke-width="1.3"/></svg>
<svg class="a" style="left:454.3px;top:95.2px;" width="5.6" height="4.4" viewBox="0 0 5.6 4.4"><path d="M0 0H5.6L2.8 4.4Z" fill="#c6c9ce"/></svg>
<span class="t" style="left:474.20px;top:73.07px;font-size:9.6px;color:#2a303c;letter-spacing:0.441px;">Arrange</span>
<svg class="a" style="left:475px;top:88px;" width="18" height="18" viewBox="0 0 18 18"><path class="ic" d="M1.8 8.4V1.9H8.6V3.4M16.1 9.4V16H9.3V14.6" stroke-width="1.3" stroke-linejoin="miter" stroke-linecap="butt"/><rect class="ic" x="5.3" y="5.2" width="7.6" height="7.5" rx="0.6" stroke-width="1.5" style="fill:#fff"/></svg>
<svg class="a" style="left:496.3px;top:95.2px;" width="5.6" height="4.4" viewBox="0 0 5.6 4.4"><path d="M0 0H5.6L2.8 4.4Z" fill="#2f3542"/></svg>
<span class="t" style="left:531.60px;top:73.07px;font-size:9.6px;color:#2a303c;letter-spacing:0.243px;">Flip</span>
<svg class="a" style="left:527px;top:87px;" width="18" height="19" viewBox="0 0 18 19"><path class="ic" d="M7.2 2.6V16.8H2.2ZM10.8 2.6V16.8H15.8Z" stroke-width="1.3" stroke-linejoin="miter"/></svg>
<svg class="a" style="left:548.3px;top:95.2px;" width="5.6" height="4.4" viewBox="0 0 5.6 4.4"><path d="M0 0H5.6L2.8 4.4Z" fill="#2f3542"/></svg>
<span class="t" style="left:583.80px;top:73.07px;font-size:9.6px;color:#2a303c;letter-spacing:0.513px;">Offset</span>
<svg class="a" style="left:584px;top:87px;" width="20" height="20" viewBox="0 0 20 20"><path d="M10 2.2L18 8L15 17.4H5L2 8Z" fill="none" stroke="#2f3542" stroke-width="1.3" stroke-dasharray="2.6 1.7" stroke-linejoin="round"/><path class="ic" d="M10 6.4L14 9.4L12.5 14H7.5L6 9.4Z" stroke-width="1.3"/></svg>
<svg class="a" style="left:606.3px;top:95.2px;" width="5.6" height="4.4" viewBox="0 0 5.6 4.4"><path d="M0 0H5.6L2.8 4.4Z" fill="#2f3542"/></svg>
<span class="t" style="left:642.40px;top:73.07px;font-size:9.6px;color:#2a303c;letter-spacing:0.368px;">Create Sticker</span>
<svg class="a" style="left:659px;top:87px;" width="24" height="23" viewBox="0 0 24 23"><path class="ic" d="M9.2 20.6C4.6 19.6 2.4 15.6 2.4 11.8C2.4 6.6 6.4 2.6 11.6 2.6C16.4 2.6 20.4 6 20.8 10.4C13.6 10 9.2 14 9.2 20.6ZM20.8 10.4L9.2 20.6" stroke-width="1.4"/></svg>
<svg class="a" style="left:685.2px;top:97.1px;" width="5.6" height="4.4" viewBox="0 0 5.6 4.4"><path d="M0 0H5.6L2.8 4.4Z" fill="#2f3542"/></svg>
<span class="t" style="left:742.30px;top:73.07px;font-size:9.6px;color:#2a303c;letter-spacing:0.440px;">Warp</span>
<svg class="a" style="left:738px;top:91px;" width="24" height="16" viewBox="0 0 24 16"><path class="ic" d="M2.4 2.6C8 4.4 16 4.4 21.6 2.6C20.4 6.4 20.4 9.6 21.6 13.4C16 11.6 8 11.6 2.4 13.4C3.6 9.6 3.6 6.4 2.4 2.6ZM8.8 3.8V12.2M15.2 3.8V12.2" stroke-width="1.4"/></svg>
<svg class="a" style="left:764.3px;top:97.1px;" width="5.6" height="4.4" viewBox="0 0 5.6 4.4"><path d="M0 0H5.6L2.8 4.4Z" fill="#2f3542"/></svg>
<span class="t" style="left:800.40px;top:73.07px;font-size:9.6px;color:#2a303c;letter-spacing:0.141px;">Size</span>
<span class="t" style="left:800.70px;top:92.11px;font-size:9.2px;color:#5a5f6a;">W</span>
<div class="a" style="left:815px;top:87px;width:57px;height:18px;border:1px solid #c6c6c6;border-radius:3px;background:#fff"></div>
<div class="a" style="left:858px;top:87.5px;width:1px;height:17px;background:#c6c6c6"></div>
<span class="t" style="left:820.80px;top:91.73px;font-size:10.6px;color:#4a4f5a;letter-spacing:0.493px;">3.933</span>
<svg class="a" style="left:862px;top:90px;" width="6.4" height="12" viewBox="0 0 6.4 12"><path d="M0 4.4H6L3 0.4Z M0 7.2H6L3 11.4Z" fill="#2f3542"/></svg>
<span class="t" style="left:887.00px;top:92.11px;font-size:9.2px;color:#5a5f6a;">H</span>
<div class="a" style="left:899px;top:87px;width:56.5px;height:18px;border:1px solid #c6c6c6;border-radius:3px;background:#fff"></div>
<div class="a" style="left:942px;top:87.5px;width:1px;height:17px;background:#c6c6c6"></div>
<span class="t" style="left:905.20px;top:91.73px;font-size:10.6px;color:#4a4f5a;letter-spacing:0.232px;">4.5</span>
<svg class="a" style="left:946px;top:90px;" width="6.4" height="12" viewBox="0 0 6.4 12"><path d="M0 4.4H6L3 0.4Z M0 7.2H6L3 11.4Z" fill="#2f3542"/></svg>
<svg class="a" style="left:872px;top:72px;" width="30" height="16" viewBox="0 0 30 16"><path d="M1.6 14V10.6H7.6M28.4 14V10.6H24" stroke="#b9bcc2" stroke-width="1" fill="none"/><rect class="ic" x="11.6" y="7" width="9" height="7.4" rx="1.2" stroke-width="1.5"/><path class="ic" d="M13.4 7V5.2C13.4 1.8 18.8 1.8 18.8 5.2V7" stroke-width="1.5"/><path d="M16.1 9.6v2.2" stroke="#2f3542" stroke-width="1.4" fill="none"/></svg>
<span class="t" style="left:981.20px;top:83.59px;font-size:11px;color:#2a303c;letter-spacing:-0.554px;">More</span>
<svg class="a" style="left:1007px;top:88.3px;" width="8" height="4.3" viewBox="0 0 8 4.3"><path d="M0 0H8L4 4.3Z" fill="#15181e"/></svg>
<div class="a" style="left:1px;top:64px;width:70px;height:791px;background:#fff;border-right:1px solid #d6d6d6;z-index:2"></div>
<span class="t" style="left:25.80px;top:109.97px;font-size:9.6px;color:#333a46;letter-spacing:0.397px;z-index:2;">New</span>
<span class="t" style="left:12.90px;top:177.97px;font-size:9.6px;color:#333a46;letter-spacing:0.418px;z-index:2;">Templates</span>
<span class="t" style="left:17.80px;top:245.87px;font-size:9.6px;color:#333a46;letter-spacing:0.303px;z-index:2;">Projects</span>
<span class="t" style="left:19.00px;top:337.87px;font-size:9.6px;color:#333a46;letter-spacing:0.268px;z-index:2;">Shapes</span>
<span class="t" style="left:19.70px;top:405.87px;font-size:9.6px;color:#333a46;letter-spacing:0.384px;z-index:2;">Images</span>
<span class="t" style="left:27.30px;top:473.87px;font-size:9.6px;color:#333a46;letter-spacing:0.098px;z-index:2;">Text</span>
<span class="t" style="left:10.80px;top:541.97px;font-size:9.6px;color:#333a46;letter-spacing:0.659px;z-index:2;">Monogram</span>
<span class="t" style="left:19.60px;top:633.87px;font-size:9.6px;color:#333a46;letter-spacing:0.455px;z-index:2;">Upload</span>
<div class="a" style="left:9px;top:282px;width:53px;height:1px;background:#c9c9c9;z-index:2;"></div>
<div class="a" style="left:9px;top:578px;width:53px;height:1px;background:#c9c9c9;z-index:2;"></div>
<svg class="a" style="left:24px;top:83px;z-index:2;" width="23" height="23" viewBox="0 0 23 23"><circle class="ic" cx="11.5" cy="11" r="9.4" stroke-width="1.4"/><path class="ic" d="M11.5 6.3v9.4M6.8 11h9.4" stroke-width="1.4"/></svg>
<svg class="a" style="left:24px;top:150px;z-index:2;" width="24" height="24" viewBox="0 0 24 24"><path class="ic" d="M8.3 3.2L3 6.2L4.6 10.2L6.6 9.5V20.3H17.4V9.5L19.4 10.2L21 6.2L15.7 3.2C15 4.6 13.7 5.3 12 5.3C10.3 5.3 9 4.6 8.3 3.2Z" stroke-width="1.4"/><path d="M9.6 9.6h1.6M12.8 9.6h1.6M9.6 14.2h1.6M12.8 14.2h1.6M9.4 9.8v1.4M9.4 12.6v1.4M14.6 9.8v1.4M14.6 12.6v1.4" stroke="#2f3542" stroke-width="1" fill="none"/></svg>
<svg class="a" style="left:25px;top:218px;z-index:2;" width="22" height="24" viewBox="0 0 22 24"><path class="ic" d="M4.8 6.6L13.6 3L14.6 5.2" stroke-width="1.4"/><rect class="ic" x="4.6" y="5.4" width="13.2" height="16.4" rx="1.6" stroke-width="1.4"/><path class="ic" d="M11.2 15.1C9.4 13.8 8.4 12.9 8.4 11.7C8.4 10.2 10.3 9.8 11.2 11.1C12.1 9.8 14 10.2 14 11.7C14 12.9 13 13.8 11.2 15.1Z" stroke-width="1.2"/><path class="ic" d="M8.6 18.2h5.2" stroke-width="1.2"/></svg>
<svg class="a" style="left:24px;top:310px;z-index:2;" width="24" height="24" viewBox="0 0 24 24"><circle class="ic" cx="15.6" cy="15.7" r="5.5" stroke-width="1.4"/><path class="ic" d="M10 3.3L17.3 14.5H2.7Z" stroke-width="1.4" style="fill:#fff"/></svg>
<svg class="a" style="left:25px;top:378px;z-index:2;" width="22" height="24" viewBox="0 0 22 24"><path class="ic" d="M11 2.6C6.6 2.6 4.2 5.8 4.2 9.2C4.2 12.6 6.6 15.4 8.6 17.2H13.4C15.4 15.4 17.8 12.6 17.8 9.2C17.8 5.8 15.4 2.6 11 2.6Z" stroke-width="1.4"/><path class="ic" d="M11 2.6C9 4.4 8.2 7 8.2 9.4C8.2 12.4 9.4 15.2 10 17.2M11 2.6C13 4.4 13.8 7 13.8 9.4C13.8 12.4 12.6 15.2 12 17.2" stroke-width="1.2"/><path class="ic" d="M8.6 18.6H13.4V21.4H8.6Z" stroke-width="1.3"/></svg>
<svg class="a" style="left:25px;top:448px;z-index:2;" width="22" height="20" viewBox="0 0 22 20"><path class="ic" d="M3.6 7.2V3.8H18.4V7.2M11 3.8V16.6M7.4 16.6H14.6" stroke-width="1.5" stroke-linecap="butt"/></svg>
<svg class="a" style="left:23px;top:515px;z-index:2;" width="26" height="22" viewBox="0 0 26 22"><path d="M3 2.8H23" stroke="#2f3542" stroke-width="1.4" fill="none"/><path d="M3.6 17.6V6.4H13.6V19.6M7 6.4V18.6M10.4 6.4V20.4" stroke="#2f3542" stroke-width="1.5" fill="none"/><path d="M23 9.4V6.4H16.8V19.6C20 19.6 23 18 23 14.6V12.6H20" stroke="#2f3542" stroke-width="1.5" fill="none"/></svg>
<svg class="a" style="left:25px;top:607px;z-index:2;" width="22" height="22" viewBox="0 0 22 22"><path class="ic" d="M4.6 5.6V3.9H17.4V5.6" stroke-width="1.5"/><path class="ic" d="M11 19V8.6M6.8 12.8L11 8.4L15.2 12.8" stroke-width="1.5"/></svg>
<div class="a" style="left:1px;top:1px;width:1372px;height:63px;background:#fff;box-shadow:0 0.5px 2.5px rgba(0,0,0,.2);z-index:3"></div>
<span class="t" style="left:25.30px;top:20.62px;font-size:21px;color:#15181e;letter-spacing:0.364px;-webkit-text-stroke:0.3px #15181e;z-index:4;">Untitled Project*</span>
<span class="t" style="left:966.30px;top:24.53px;font-size:14.5px;color:#2b2b2b;letter-spacing:-0.917px;z-index:4;">Save</span>
<svg class="a" style="left:1018px;top:21px;z-index:4;" width="22" height="20" viewBox="0 0 22 20"><path class="ic" d="M2.8 9.2L5.4 3.8H16.6L19.2 9.2V17H2.8Z" stroke-width="1.7" style="stroke:#15181e"/><path class="ic" d="M2.8 9.2H7.6C7.9 11.3 9.2 12.4 11 12.4C12.8 12.4 14.1 11.3 14.4 9.2H19.2" stroke-width="1.7" style="stroke:#15181e"/></svg>
<span class="t" style="left:1045.80px;top:24.53px;font-size:14.5px;color:#2b2b2b;letter-spacing:-0.031px;z-index:4;">My Stuff</span>
<svg class="a" style="left:1120px;top:23px;z-index:4;" width="22" height="17" viewBox="0 0 22 17"><path class="ic" d="M2.8 9.3V6.2C2.8 4.9 3.8 4 5 4H17C18.2 4 19.2 4.9 19.2 6.2V9.3" stroke-width="1.7" style="stroke:#15181e"/><path class="ic" d="M2.8 9.3H19.2V13.6H15.4L14.6 12.2H7.4L6.6 13.6H2.8Z" stroke-width="1.7" style="stroke:#15181e"/></svg>
<span class="t" style="left:1147.90px;top:24.53px;font-size:14.5px;color:#2b2b2b;letter-spacing:-0.313px;z-index:4;">Maker 3</span>
<div class="a" style="left:1219px;top:12px;width:132px;height:40px;background:#04865b;border-radius:20px;z-index:4;"></div>
<span class="t" style="left:1267.90px;top:24.53px;font-size:14.5px;color:#fff;font-weight:700;letter-spacing:-0.358px;z-index:4;">Make</span>
<div class="a" style="left:1073px;top:64px;width:300px;height:791px;background:#fff;border-left:1px solid #e2e2e2;z-index:2"></div>
<span class="t" style="left:1091.40px;top:79.90px;font-size:15px;color:#04865b;letter-spacing:-0.425px;-webkit-text-stroke:0.4px #04865b;z-index:2;">Layers</span>
<span class="t" style="left:1166.80px;top:79.90px;font-size:15px;color:#4a4a4a;letter-spacing:-0.240px;z-index:2;">Color Sync</span>
<div class="a" style="left:1074px;top:111px;width:299px;height:1px;background:#dedede;z-index:2;"></div>
<div class="a" style="left:1075px;top:109px;width:75px;height:3px;background:#04865b;z-index:2;"></div>
<svg class="a" style="left:1091px;top:124px;z-index:2;" width="23" height="23" viewBox="0 0 23 23"><rect class="ic ic2" x="4.2" y="4.2" width="8" height="8" stroke-width="1.2"/><rect class="ic ic2" x="10.4" y="10.2" width="8.2" height="8.2" stroke-width="1.2"/><circle cx="4.2" cy="4.2" r="1.7" fill="#fff" stroke="#3d3d3d" stroke-width="1.1"/><circle cx="12.2" cy="4.2" r="1.7" fill="#fff" stroke="#3d3d3d" stroke-width="1.1"/><circle cx="4.2" cy="12.2" r="1.7" fill="#fff" stroke="#3d3d3d" stroke-width="1.1"/><circle cx="10.4" cy="10.2" r="1.7" fill="#fff" stroke="#3d3d3d" stroke-width="1.1"/><circle cx="18.6" cy="10.2" r="1.7" fill="#fff" stroke="#3d3d3d" stroke-width="1.1"/><circle cx="10.4" cy="18.4" r="1.7" fill="#fff" stroke="#3d3d3d" stroke-width="1.1"/><circle cx="18.6" cy="18.4" r="1.7" fill="#fff" stroke="#3d3d3d" stroke-width="1.1"/></svg>
<svg class="a" style="left:1132px;top:125px;z-index:2;" width="22" height="22" viewBox="0 0 22 22"><path class="ic ic2" d="M6.6 16.2H2.8V2.8H15.6V6.4" stroke-width="1.3" stroke-linejoin="miter"/><rect class="ic ic2" x="6.6" y="6.6" width="12.8" height="13" stroke-width="1.3" stroke-linejoin="miter"/><path class="ic ic2" d="M13 9.8v6.6M9.7 13.1h6.6" stroke-width="1.3" stroke-linecap="butt"/></svg>
<svg class="a" style="left:1172px;top:125px;z-index:2;" width="22" height="22" viewBox="0 0 22 22"><path class="ic ic2" d="M1.8 5.6H20.2M7.6 5.4V3H14.4V5.4M3.8 5.8L5 18C5.1 19 5.8 19.6 6.8 19.6H15.2C16.2 19.6 16.9 19 17 18L18.2 5.8M9.2 9.4V15.6M12.8 9.4V15.6" stroke-width="1.3"/></svg>
<div class="a" style="left:1074px;top:161px;width:284px;height:1px;background:#e0e0e0;z-index:2;"></div>
<div class="a" style="left:1358px;top:162px;width:15px;height:594px;background:#f1f1f1;z-index:2;"></div>
<svg class="a" style="left:1358px;top:164px;z-index:2;" width="15" height="14" viewBox="0 0 15 14"><path d="M4.2 9.6l3.3-4.2 3.3 4.2z" fill="#a6a6a6"/></svg>
<svg class="a" style="left:1358px;top:741px;z-index:2;" width="15" height="14" viewBox="0 0 15 14"><path d="M4.2 4.6l3.3 4.2 3.3-4.2z" fill="#a6a6a6"/></svg>
<div class="a" style="left:1079px;top:165px;width:275px;height:56px;background:#b9eede;border-radius:5px 5px 0 0;z-index:2;"></div>
<div class="a" style="left:1079px;top:221px;width:275px;height:392px;background:#e9f9f4;border-radius:0 0 5px 5px;z-index:2;"></div>
<svg class="a" style="left:1088px;top:186px;z-index:2;" width="14" height="12" viewBox="0 0 14 12"><path d="M2.2 3.2L7 8.4L11.8 3.2" fill="none" stroke="#3d3d3d" stroke-width="1.3" stroke-linecap="round" stroke-linejoin="round"/></svg>
<div class="a" style="left:0;top:0;z-index:2"><svg class="a" style="left:1112.5px;top:180.5px" width="20.5" height="22.8" viewBox="236 186 283 325" preserveAspectRatio="none"><g stroke="#2a2019" stroke-width="8" stroke-linejoin="round"><path d="M242.2 289.6L238.8 304.8L255.2 308.2L264.6 312.3L278.3 322.2L288.5 333.1L292.2 324.1Z" fill="#e8cdb5"/>
<path d="M257.8 254.4L243.8 284.5L294.8 319.8L302.5 311.2Z" fill="#dcb18a"/>
<path d="M287.0 220.7L271.3 236.2L260.7 250.0L306.4 308.1L314.7 303.5Z" fill="#e8cdb5"/>
<path d="M313.6 203.1L291.1 217.4L319.4 301.7L324.8 300.4Z" fill="#dcb18a"/>
<path d="M360.3 188.8L338.6 193.2L319.4 200.3L329.7 299.8L341.0 300.4Z" fill="#e8cdb5"/>
<path d="M401.8 189.9L366.4 188.2L345.9 301.5L351.9 303.7Z" fill="#dcb18a"/>
<path d="M455.8 211.7L432.3 199.0L407.0 191.0L356.4 306.0L361.6 309.6Z" fill="#e8cdb5"/>
<path d="M493.5 249.2L476.8 229.0L460.0 214.6L365.4 312.9L370.6 319.0Z" fill="#dcb18a"/>
<path d="M513.2 292.0L505.8 271.2L496.3 253.4L373.3 323.3L376.3 329.7Z" fill="#e8cdb5"/>
<path d="M377.9 334.8L378.8 339.2L383.5 338.7L392.4 330.5Z" fill="#dcb18a"/>
<path d="M517.9 323.5L514.6 297.6L421.3 322.7L430.7 325.7L442.2 332.5Z" fill="#dcb18a"/>
<path d="M449.2 337.6L475.0 357.3L484.2 345.4L494.3 338.0L505.8 334.9L518.0 338.1L518.0 329.5Z" fill="#e8cdb5"/>
<path d="M238.0 310.2L236.8 399.4L244.6 390.6L252.1 387.0L260.7 385.6L271.1 387.6L279.8 391.4L294.1 401.8L326.3 433.8L337.6 437.6L357.6 437.3L337.9 429.6L332.8 424.1L333.7 416.9L346.0 402.9L345.7 397.8L324.7 383.3L310.7 371.1L274.7 326.4L257.2 314.7Z" fill="#b08568"/>
<path d="M236.8 411.6L236.8 509.6L431.0 509.6L405.4 465.0L392.5 452.2L372.6 443.2L337.0 442.0L322.7 439.4L290.3 405.7L275.8 395.2L260.6 390.7L251.3 392.8L241.5 402.5Z" fill="#cf9f75"/>
<path d="M332.2 375.6L336.6 379.5L360.7 390.2L367.3 397.1L365.6 403.0L351.5 413.9L351.7 419.3L364.1 425.7L387.9 433.3L401.4 419.3L448.8 386.3L471.4 361.4L432.2 332.7L421.5 328.4L411.8 327.8L403.0 330.3L395.3 335.2L373.0 357.8L362.3 366.0L354.6 369.7Z" fill="#956b50"/>
<path d="M394.1 434.9L404.9 441.1L418.0 453.4L450.3 509.6L518.0 509.6L518.0 343.9L504.9 340.4L493.3 344.8L453.7 390.1L437.0 403.6L403.9 425.6Z" fill="#644a3b"/>
<path d="M293.5 338.6L300.7 352.8L308.7 363.1L315.6 366.9L325.6 369.1L338.3 368.6L353.9 364.5L363.6 358.1L373.5 347.4L371.5 333.5L363.7 319.6L352.9 310.7L337.7 305.8L323.7 306.6L309.2 313.3L298.3 325.0Z" fill="#8a5e4c"/></g></svg></div>
<span class="t" style="left:1143.50px;top:185.05px;font-size:14px;color:#333;letter-spacing:0.405px;-webkit-text-stroke:0.3px #333;z-index:2;">Sun Over Mountains</span>
<span class="t" style="left:1175.40px;top:231.13px;font-size:14.5px;color:#505050;letter-spacing:0.019px;z-index:2;">Sun Over Mountains</span>
<span class="t" style="left:1175.40px;top:251.03px;font-size:14.5px;color:#848484;letter-spacing:-0.131px;z-index:2;">Basic Cut</span>
<div class="a" style="left:0;top:0;z-index:2"><svg class="a" style="left:1143.7px;top:238.7px;overflow:visible" width="21.9901" height="17.5" viewBox="293.279 305.505 80.2168 63.8376"><path d="M293.5 338.6L300.7 352.8L308.7 363.1L315.6 366.9L325.6 369.1L338.3 368.6L353.9 364.5L363.6 358.1L373.5 347.4L371.5 333.5L363.7 319.6L352.9 310.7L337.7 305.8L323.7 306.6L309.2 313.3L298.3 325.0Z" fill="#8a5e4c" stroke="#3a2a20" stroke-width="2.91829" stroke-linejoin="round"/></svg></div>
<span class="t" style="left:1175.40px;top:287.13px;font-size:14.5px;color:#505050;letter-spacing:0.019px;z-index:2;">Sun Over Mountains</span>
<span class="t" style="left:1175.40px;top:307.03px;font-size:14.5px;color:#848484;letter-spacing:-0.131px;z-index:2;">Basic Cut</span>
<div class="a" style="left:0;top:0;z-index:2"><svg class="a" style="left:1143px;top:296.457px;overflow:visible" width="23.5" height="14.185" viewBox="238.799 188.742 279.201 168.531"><path d="M242.2 289.6L238.8 304.8L255.2 308.2L264.6 312.3L278.3 322.2L288.5 333.1L292.2 324.1ZM287.0 220.7L271.3 236.2L260.7 250.0L306.4 308.1L314.7 303.5ZM360.3 188.8L338.6 193.2L319.4 200.3L329.7 299.8L341.0 300.4ZM455.8 211.7L432.3 199.0L407.0 191.0L356.4 306.0L361.6 309.6ZM513.2 292.0L505.8 271.2L496.3 253.4L373.3 323.3L376.3 329.7ZM448.3 336.9L475.0 357.3L484.2 345.4L494.3 338.0L505.8 334.9L518.0 338.1L518.0 329.5Z" fill="#e3bf9f" stroke="#3a2a20" stroke-width="9.50472" stroke-linejoin="round"/></svg></div>
<span class="t" style="left:1175.40px;top:343.23px;font-size:14.5px;color:#505050;letter-spacing:0.019px;z-index:2;">Sun Over Mountains</span>
<span class="t" style="left:1175.40px;top:363.13px;font-size:14.5px;color:#848484;letter-spacing:-0.131px;z-index:2;">Basic Cut</span>
<div class="a" style="left:0;top:0;z-index:2"><svg class="a" style="left:1143.6px;top:352.519px;overflow:visible" width="22.2" height="12.2625" viewBox="243.846 187.8 274.094 151.399"><path d="M257.8 254.4L243.8 284.5L294.8 319.8L302.5 311.2ZM314.6 202.6L291.1 217.4L319.4 301.7L324.8 300.4ZM401.8 189.9L384.8 188.0L366.4 188.2L345.9 301.5L351.9 303.7ZM493.5 249.2L476.8 229.0L460.0 214.6L365.4 312.9L370.6 319.0ZM377.9 334.8L378.8 339.2L383.5 338.7L392.4 330.5ZM517.9 323.5L514.6 297.6L421.3 322.7L430.7 325.7L442.2 332.5Z" fill="#d9a77c" stroke="#3a2a20" stroke-width="9.87726" stroke-linejoin="round"/></svg></div>
<span class="t" style="left:1175.40px;top:399.23px;font-size:14.5px;color:#505050;letter-spacing:0.019px;z-index:2;">Sun Over Mountains</span>
<span class="t" style="left:1175.40px;top:419.13px;font-size:14.5px;color:#848484;letter-spacing:-0.131px;z-index:2;">Basic Cut</span>
<div class="a" style="left:0;top:0;z-index:2"><svg class="a" style="left:1143.6px;top:405.304px;overflow:visible" width="21" height="22.1928" viewBox="236.8 310.239 120.8 127.661"><path d="M238.0 310.2L236.8 399.4L244.6 390.6L252.1 387.0L260.7 385.6L271.1 387.6L279.8 391.4L294.1 401.8L326.3 433.8L337.6 437.6L357.6 437.3L337.9 429.6L332.8 424.1L333.7 416.9L346.0 402.9L345.7 397.8L324.7 383.3L310.7 371.1L286.4 339.2L274.7 326.4L257.2 314.7Z" fill="#b08568" stroke="#3a2a20" stroke-width="4.6019" stroke-linejoin="round"/></svg></div>
<span class="t" style="left:1175.40px;top:454.73px;font-size:14.5px;color:#505050;letter-spacing:0.019px;z-index:2;">Sun Over Mountains</span>
<span class="t" style="left:1175.40px;top:474.63px;font-size:14.5px;color:#848484;letter-spacing:-0.131px;z-index:2;">Basic Cut</span>
<div class="a" style="left:0;top:0;z-index:2"><svg class="a" style="left:1143.6px;top:462.394px;overflow:visible" width="22.7" height="17.2123" viewBox="332 327.6 139.4 105.7"><path d="M332.2 375.6L336.6 379.5L360.7 390.2L367.3 397.1L367.4 400.2L365.6 403.0L351.5 413.9L350.5 416.5L351.7 419.3L364.1 425.7L387.9 433.3L401.4 419.3L448.8 386.3L471.4 361.4L432.2 332.7L421.5 328.4L411.8 327.8L403.0 330.3L395.3 335.2L373.0 357.8L362.3 366.0L354.6 369.7Z" fill="#956b50" stroke="#3a2a20" stroke-width="4.91278" stroke-linejoin="round"/></svg></div>
<span class="t" style="left:1175.40px;top:510.73px;font-size:14.5px;color:#505050;letter-spacing:0.019px;z-index:2;">Sun Over Mountains</span>
<span class="t" style="left:1175.40px;top:530.63px;font-size:14.5px;color:#848484;letter-spacing:-0.131px;z-index:2;">Basic Cut</span>
<div class="a" style="left:0;top:0;z-index:2"><svg class="a" style="left:1143.6px;top:520.795px;overflow:visible" width="22.7" height="13.9099" viewBox="236.8 390.6 194.2 119"><path d="M236.8 411.6L236.8 509.6L431.0 509.6L405.4 465.0L392.5 452.2L382.3 446.3L372.6 443.2L337.0 442.0L322.7 439.4L290.3 405.7L275.8 395.2L260.6 390.7L251.3 392.8L246.3 396.2L241.5 402.5Z" fill="#cf9f75" stroke="#3a2a20" stroke-width="6.84405" stroke-linejoin="round"/></svg></div>
<span class="t" style="left:1175.40px;top:567.73px;font-size:14.5px;color:#505050;letter-spacing:0.019px;z-index:2;">Sun Over Mountains</span>
<span class="t" style="left:1175.40px;top:587.63px;font-size:14.5px;color:#848484;letter-spacing:-0.131px;z-index:2;">Basic Cut</span>
<div class="a" style="left:0;top:0;z-index:2"><svg class="a" style="left:1146.09px;top:573.5px;overflow:visible" width="16.823" height="22.9" viewBox="393.7 340.399 124.3 169.201"><path d="M394.1 434.9L404.9 441.1L418.0 453.4L450.3 509.6L518.0 509.6L518.0 343.9L504.9 340.4L493.3 344.8L485.7 351.9L464.4 379.1L453.7 390.1L437.0 403.6L403.9 425.6Z" fill="#644a3b" stroke="#3a2a20" stroke-width="5.91096" stroke-linejoin="round"/></svg></div>
<div class="a" style="left:1074px;top:756px;width:299px;height:50px;background:#f4f4f4;z-index:2;"></div>
<div class="a" style="left:1199px;top:750px;width:135px;height:11px;background:#fff;box-shadow:0 5px 9px rgba(0,0,0,.07);z-index:2;"></div>
<div class="a" style="left:1074px;top:740px;width:284px;height:16px;background:#fff;z-index:2;"></div>
<div class="a" style="left:1085px;top:763px;width:53px;height:36px;background:#fff;border:1.3px solid #5a5a5a;border-radius:2.5px;z-index:2;"></div>
<span class="t" style="left:1148.30px;top:777.20px;font-size:9.8px;color:#333;letter-spacing:0.103px;z-index:2;">Blank Canvas</span>
<div class="a" style="left:1074px;top:806px;width:299px;height:49px;background:#fff;z-index:2;"></div>
<svg class="a" style="left:1098px;top:810px;z-index:2;" width="22" height="22" viewBox="0 0 22 22"><path d="M8 14.85A6.2 6.2 0 1 1 14.95 7.9" fill="none" stroke="#c6c6c6" stroke-width="1.3"/><path d="M9.6 9.4H14.6A6 6 0 0 1 9.6 14.4Z" fill="none" stroke="#c6c6c6" stroke-width="1.2" stroke-linejoin="round"/><path d="M19.4 9.6V19.4H9.6V16.6" fill="none" stroke="#c6c6c6" stroke-width="1.3"/></svg>
<span class="t" style="left:1098.40px;top:837.92px;font-size:9.9px;color:#c6c6c6;letter-spacing:0.085px;z-index:2;">Slice</span>
<svg class="a" style="left:1152px;top:810px;z-index:2;" width="22" height="22" viewBox="0 0 22 22"><rect x="2.8" y="2.8" width="10.6" height="10.6" fill="none" stroke="#15181e" stroke-width="1.4"/><circle cx="13.4" cy="13.6" r="5.6" fill="none" stroke="#15181e" stroke-width="1.4"/></svg>
<svg class="a" style="left:1177px;top:821px;z-index:2;" width="8" height="4.4" viewBox="0 0 8 4.4"><path d="M0 0H7.6L3.8 4.2Z" fill="#15181e"/></svg>
<span class="t" style="left:1147.30px;top:837.92px;font-size:9.9px;color:#1c1c1c;letter-spacing:0.380px;-webkit-text-stroke:0.12px #1c1c1c;z-index:2;">Combine</span>
<svg class="a" style="left:1213px;top:812px;z-index:2;" width="24" height="16" viewBox="0 0 24 16"><path d="M18.3 7H6.6A1.4 1.4 0 0 0 6.6 9.8H18.3A3.1 3.1 0 0 0 18.3 3.6H7.1A4.85 4.85 0 0 0 7.1 13.3H18.3" fill="none" stroke="#15181e" stroke-width="1.4" stroke-linecap="round"/></svg>
<span class="t" style="left:1210.20px;top:837.92px;font-size:9.9px;color:#1c1c1c;letter-spacing:0.347px;-webkit-text-stroke:0.12px #1c1c1c;z-index:2;">Attach</span>
<svg class="a" style="left:1271px;top:809px;z-index:2;" width="22" height="23" viewBox="0 0 22 23"><path d="M11 2.4V8.4M8 5.8L11 8.8L14 5.8" fill="none" stroke="#15181e" stroke-width="1.4" stroke-linecap="round" stroke-linejoin="round"/><path d="M5 8L2.8 9.6L11 14.6L19.2 9.6L17 8" fill="none" stroke="#15181e" stroke-width="1.4" stroke-linejoin="round" stroke-linecap="round"/><path d="M5.4 12.6L2.8 14.4L11 19.6L19.2 14.4L16.6 12.6" fill="none" stroke="#15181e" stroke-width="1.4" stroke-linejoin="round" stroke-linecap="round"/></svg>
<span class="t" style="left:1266.30px;top:837.92px;font-size:9.9px;color:#1c1c1c;letter-spacing:0.172px;-webkit-text-stroke:0.12px #1c1c1c;z-index:2;">Flatten</span>
<svg class="a" style="left:1329px;top:809px;z-index:2;" width="24" height="24" viewBox="0 0 24 24"><circle cx="12" cy="12" r="9.4" fill="none" stroke="#c6c6c6" stroke-width="1.4" stroke-dasharray="4.4 2.98"/></svg>
<span class="t" style="left:1322.00px;top:837.92px;font-size:9.9px;color:#c6c6c6;letter-spacing:0.380px;z-index:2;">Contour</span>
<div class="a" style="left:0px;top:0px;width:1374px;height:856px;border:1px solid #000;pointer-events:none;z-index:10"></div>
</body></html>
